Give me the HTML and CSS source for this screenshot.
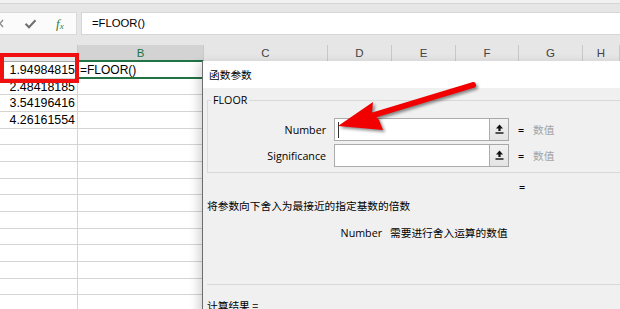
FILE: index.html
```html
<!DOCTYPE html>
<html lang="zh-CN">
<head>
<meta charset="utf-8">
<title>FLOOR</title>
<link rel="stylesheet" href="styles.css">
</head>
<body>
<div class="top"></div>
<div class="fbar">
  <div class="fbar-left">
    <svg class="ico-x" width="6" height="10" viewBox="0 0 6 10"><path d="M-3 1 L3 8 M3 1 L-3 8" stroke="#8a8a8a" stroke-width="1.4" fill="none"/></svg>
    <svg class="ico-check" width="13" height="10" viewBox="0 0 13 10"><path d="M1.5 4.8 L5 8.3 L11.5 1.3" stroke="#6e6e6e" stroke-width="2" fill="none"/></svg>
    <span class="fx">f<sub>x</sub></span>
  </div>
  <div class="finput">=FLOOR()</div>
</div>
<div class="band"></div>
<div class="sheet">
  <div class="hc"></div><div class="hc sel">B</div><div class="hc">C</div><div class="hc">D</div><div class="hc">E</div><div class="hc">F</div><div class="hc">G</div><div class="hc">H</div>

  <div class="c num">1.94984815</div><div class="c txt active">=FLOOR()</div><div class="c rest"></div>
  <div class="c num">2.48418185</div><div class="c"></div><div class="c rest"></div>
  <div class="c num">3.54196416</div><div class="c"></div><div class="c rest"></div>
  <div class="c num">4.26161554</div><div class="c"></div><div class="c rest"></div>
  <div class="c"></div><div class="c"></div><div class="c rest"></div>
  <div class="c"></div><div class="c"></div><div class="c rest"></div>
  <div class="c"></div><div class="c"></div><div class="c rest"></div>
  <div class="c"></div><div class="c"></div><div class="c rest"></div>
  <div class="c"></div><div class="c"></div><div class="c rest"></div>
  <div class="c"></div><div class="c"></div><div class="c rest"></div>
  <div class="c"></div><div class="c"></div><div class="c rest"></div>
  <div class="c"></div><div class="c"></div><div class="c rest"></div>
  <div class="c"></div><div class="c"></div><div class="c rest"></div>
  <div class="c"></div><div class="c"></div><div class="c rest"></div>
  <div class="c"></div><div class="c"></div><div class="c rest"></div>
</div>

<div class="dialog">
  <div class="dlg-title">函数参数</div>
  <div class="dlg-body">
    <div class="group">
      <span class="group-title">FLOOR</span>
      <div class="arg-row">
        <span class="arg-label">Number</span>
        <div class="field"><span class="caret"></span></div>
        <div class="pick"><svg width="9" height="10" viewBox="0 0 9 10"><path d="M4.5 0.5 L8 4.5 L5.6 4.5 L5.6 7 L3.4 7 L3.4 4.5 L1 4.5 Z" fill="#111"/><rect x="0.5" y="8.3" width="8" height="1.4" fill="#111"/></svg></div>
        <span class="eq">=</span>
        <span class="hint">数值</span>
      </div>
      <div class="arg-row">
        <span class="arg-label">Significance</span>
        <div class="field"></div>
        <div class="pick"><svg width="9" height="10" viewBox="0 0 9 10"><path d="M4.5 0.5 L8 4.5 L5.6 4.5 L5.6 7 L3.4 7 L3.4 4.5 L1 4.5 Z" fill="#111"/><rect x="0.5" y="8.3" width="8" height="1.4" fill="#111"/></svg></div>
        <span class="eq">=</span>
        <span class="hint">数值</span>
      </div>
    </div>
    <div class="result-eq">=</div>
    <p class="desc">将参数向下舍入为最接近的指定基数的倍数</p>
    <div class="arg-desc"><span class="ad-name">Number</span><span class="ad-text">需要进行舍入运算的数值</span></div>
    <div class="sep"></div>
    <div class="calc">计算结果 =</div>
  </div>
</div>

<div class="redbox"></div>
<svg class="annot" width="620" height="309" viewBox="0 0 620 309">
  <g class="arrow">
    <line x1="374" y1="115" x2="473" y2="85" stroke="#f20000" stroke-width="6" stroke-linecap="round"/>
    <polygon points="338,126 373,102 372,112 379,120 383,130" fill="#f20000"/>
  </g>
</svg>
</body>
</html>
```

FILE: styles.css
```css
* { box-sizing: border-box; margin: 0; padding: 0; }
html, body { width: 620px; height: 309px; overflow: hidden; }
body {
  position: relative;
  background: #e6e6e6;
  font-family: "Liberation Sans", Arial, sans-serif;
  color: #000;
}

/* ribbon edge */
.top {
  height: 11px;
  background: linear-gradient(#f1f1f1 0 3px, #d6d6d6 3px 4px, #e6e6e6 4px);
}

/* formula bar */
.fbar {
  display: flex;
  height: 25px;
  padding: 1px 0;
  gap: 4px;
}
.fbar-left {
  width: 77px;
  background: #fbfbfb;
  border-top: 1px solid #dadada;
  border-bottom: 1px solid #dadada;
  border-right: 1px solid #dadada;
  display: flex;
  align-items: center;
}
.ico-x { margin-left: 0; }
.ico-check { margin-left: 18px; margin-top: 1px; }
.fx {
  margin-left: 19px;
  font-family: "Liberation Serif", serif;
  font-style: italic;
  font-size: 13px;
  color: #2f7d3f;
  line-height: 1;
}
.fx sub { font-size: 9px; vertical-align: -1px; }
.finput {
  flex: 1;
  background: #fff;
  border: 1px solid #d6d6d6;
  border-right: none;
  padding-left: 10px;
  font-size: 11.3px;
  line-height: 21px;
}

.band { height: 9px; }

/* sheet grid */
.sheet {
  display: grid;
  grid-template-columns: 78px 126px 124px 64px 64px 63px 64px 1fr;
  grid-template-rows: 17px;
  grid-auto-rows: 16.667px;
  background: #fff;
}
.hc {
  background: #e6e6e6;
  border-right: 1px solid #c9c9c9;
  border-bottom: 1px solid #a9a9a9;
  text-align: center;
  font-size: 11.5px;
  line-height: 16px;
  color: #444;
}
.hc.sel {
  background: #d3d3d3;
  color: #217346;
  border-bottom: 2px solid #217346;
}
.c {
  border-right: 1px solid #d4d4d4;
  border-bottom: 1px solid #d4d4d4;
  font-size: 12.4px;
  line-height: 17px;
  white-space: nowrap;
  overflow: hidden;
}
.c.num { text-align: right; padding-right: 2px; }
.c.txt { padding-left: 2px; font-size: 12px; line-height: 16px; }
.c.active { border-bottom: 2px solid #217346; }
.c.rest { grid-column: 3 / -1; }

/* dialog window */
.dialog {
  position: absolute;
  left: 202px;
  top: 61px;
  width: 430px;
  height: 260px;
  background: #f0f0f0;
  border-left: 1px solid #6e6e6e;
  box-shadow: -6px 0 9px -2px rgba(0, 0, 0, 0.16);
  font-family: "Open Sans", "Noto Sans CJK SC", sans-serif;
  font-size: 10.7px;
  color: #000;
}
.dlg-title {
  height: 27px;
  background: #fff;
  padding-left: 6px;
  line-height: 27px;
  font-family: "Noto Sans CJK SC", sans-serif;
}
.dlg-body {
  padding-left: 4px;
}
.group {
  position: relative;
  margin-top: 12px;
  border: 1px solid #d9d9d9;
  border-right: none;
  padding: 17px 0 5px 0;
  display: flex;
  flex-direction: column;
  gap: 3px;
}
.group-title {
  position: absolute;
  top: -8px;
  left: 3px;
  padding: 0 2px;
  background: #f0f0f0;
  line-height: 14px;
}
.arg-row {
  display: flex;
  align-items: center;
  height: 23px;
}
.arg-label {
  width: 118px;
  text-align: right;
  margin-right: 8px;
}
.field {
  width: 156px;
  height: 23px;
  background: #fff;
  border: 1px solid #acacac;
  display: flex;
  align-items: center;
}
.caret {
  width: 1px;
  height: 16px;
  background: #333;
  margin-left: 3px;
}
.pick {
  width: 19px;
  height: 23px;
  border: 1px solid #a8a8a8;
  border-left: none;
  background: linear-gradient(#f2f2f2, #e3e3e3);
  display: flex;
  justify-content: center;
  padding-top: 5px;
}
.eq {
  margin-left: 9px;
  width: 15px;
  font-weight: 600;
}
.hint {
  color: #a3a3a3;
  font-family: "Noto Sans CJK SC", sans-serif;
}
.result-eq {
  margin-top: 7px;
  padding-left: 312px;
  line-height: 14px;
  font-weight: 600;
}
.desc {
  margin-top: 5px;
  line-height: 14px;
  font-family: "Noto Sans CJK SC", sans-serif;
}
.arg-desc {
  display: grid;
  grid-template-columns: 175px auto;
  column-gap: 8px;
  margin-top: 13px;
  line-height: 14px;
}
.ad-name { text-align: right; }
.ad-text { font-family: "Noto Sans CJK SC", sans-serif; }
.sep {
  margin-top: 44px;
  border-top: 1px solid #d9d9d9;
}
.calc {
  margin-top: 14px;
  line-height: 14px;
  font-family: "Noto Sans CJK SC", sans-serif;
}

/* annotations */
.redbox {
  position: absolute;
  left: 0;
  top: 53px;
  width: 79px;
  height: 30px;
  border: 4px solid #f01010;
}
.annot {
  position: absolute;
  left: 0;
  top: 0;
  pointer-events: none;
}
.arrow {
  filter: drop-shadow(2px 2px 1.5px rgba(0, 0, 0, 0.45));
}
```
